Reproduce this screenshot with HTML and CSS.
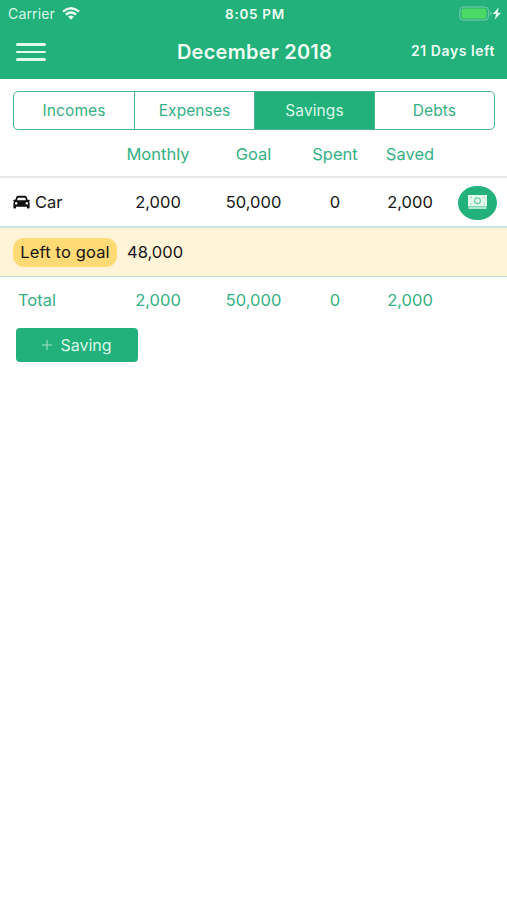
FILE: index.html
```html
<!DOCTYPE html>
<html lang="en">
<head>
<meta charset="utf-8">
<title>December 2018</title>
<link rel="stylesheet" href="styles.css">
</head>
<body>
<header class="top">
  <div class="status">
    <div class="carrier"><span>Carrier</span>
      <svg width="18" height="14" viewBox="0 0 18 14" fill="none" stroke="#effff6" stroke-width="2.3"><path d="M1 4.700Q9-2.100 17 4.700M3.900 7.700Q9 3.400 14.100 7.700"/><path d="M6.100 9.700Q9 7.400 11.900 9.700L9 12.700Z" fill="#effff6" stroke="none"/></svg>
    </div>
    <div class="time">8:05 PM</div>
    <div class="power">
      <svg width="44" height="16" viewBox="0 0 44 16"><rect x=".8" y="1" width="28.600" height="13" rx="3.400" fill="none" stroke="#79ceaa"/><rect x="2.500" y="2.600" width="25" height="9.800" rx="1.600" fill="#4bd865"/><path d="M31 5.400q1.600.5 1.600 2t-1.600 2z" fill="#79ceaa"/><path d="M39.800 1.300l-6 6.600h3.300l-1.300 5.600 6.100-6.700h-3.400z" fill="#effff6"/></svg>
    </div>
  </div>
  <nav class="bar">
    <div class="menu"><i></i><i></i><i></i></div>
    <h1 class="title">December 2018</h1>
    <div class="days">21 Days left</div>
  </nav>
</header>
<main>
  <div class="tabs">
    <div class="tab">Incomes</div>
    <div class="tab">Expenses</div>
    <div class="tab active">Savings</div>
    <div class="tab">Debts</div>
  </div>
  <div class="row head"><span></span><span>Monthly</span><span>Goal</span><span>Spent</span><span>Saved</span></div>
  <div class="row item">
    <span class="name"><svg width="17" height="14" viewBox="0 0 18 15"><path fill="#111" fill-rule="evenodd" d="M5.500.800h7q1.700 0 2.200 1.500l.9 2.800h1.600q.8 0 .6.800l-.2.700-1 .2q1.100.8 1.100 2v4.700q0 .9-.9.900h-1.100q-.9 0-.9-.9v-1H3.200v1q0 .9-.9.900H1.200q-.9 0-.9-.9V8.800q0-1.200 1.100-2l-1-.2-.2-.7q-.2-.8.6-.8h1.600l.9-2.800Q3.800.800 5.500.800ZM5.400 3q-.4 0-.5.400L4.300 5.500h9.400L13.100 3.400q-.1-.4-.5-.4ZM3.300 7.600a1.400 1.300 0 1 0 .01 0ZM14.700 7.600a1.400 1.300 0 1 0 .01 0Z"/></svg>Car</span>
    <span>2,000</span><span>50,000</span><span>0</span><span>2,000</span>
    <span class="pay"><svg width="19" height="14" viewBox="0 0 19 14"><path fill="#e2faee" d="M0 0h19v11.500H0zM.5 12.300h18v1.400H.5z"/><circle cx="9.500" cy="5.700" r="2.900" fill="none" stroke="#63c69c" stroke-width="1.100"/><path fill="#8ed7b7" d="M2 1.700h1.500v1.200H2zM15.500 1.700H17v1.200h-1.500zM2 8.600h1.500v1.200H2zM15.500 8.600H17v1.200h-1.500z"/></svg></span>
  </div>
  <div class="left"><span class="pill">Left to goal</span><span class="amount">48,000</span></div>
  <div class="row total"><span class="label">Total</span><span>2,000</span><span>50,000</span><span>0</span><span>2,000</span></div>
  <div class="add"><svg width="10" height="10" viewBox="0 0 10 10"><path d="M5 0v10M0 5h10" stroke="#a9e3c9"/></svg><span>Saving</span></div>
</main>
</body>
</html>
```
FILE: styles.css
```css
* { box-sizing: border-box; }
body { margin: 0; background: #fff; color: #151515; font: 16.5px/20px Inter, "Liberation Sans", sans-serif; }
.top { height: 79px; background: #22b07b; color: #effff6; }
.status { height: 27px; display: grid; grid-template-columns: 1fr auto 1fr; align-items: center; padding: 0 5px 0 8px; }
.carrier { display: flex; align-items: center; gap: 7px; font-size: 14px; letter-spacing: .15px; color: #d9f8e9; }
.time { font-size: 13.5px; font-weight: 600; letter-spacing: .7px; }
.power { display: flex; justify-content: flex-end; }
.power svg { margin-right: -1px; }
.bar { height: 50px; display: grid; grid-template-columns: 1fr auto 1fr; align-items: center; padding: 0 12px 0 16px; }
.menu { width: 30px; display: grid; gap: 4.500px; }
.menu i { height: 2.700px; border-radius: 2px; background: #dffaed; }
.title { margin: 0; font-size: 20px; font-weight: 600; line-height: 24px; letter-spacing: .25px; margin-right: 2px; }
.days { text-align: right; font-size: 14px; font-weight: 600; letter-spacing: .55px; line-height: 20px; padding-bottom: 2px; }
.tabs { height: 39px; margin: 12px 12px 0 13px; display: grid; grid-template-columns: repeat(4, 1fr); border: 1.5px solid #4cb78f; border-radius: 5px; overflow: hidden; color: #35b084; font-size: 15.5px; letter-spacing: .1px; }
.tab { display: flex; align-items: center; justify-content: center; }
.tab + .tab { border-left: 1px solid #4cb78f; }
.tab.active { background: #22b07b; color: #d9f8e9; }
.row { display: grid; grid-template-columns: 115px 86px 105px 58px 92px 1fr; align-items: center; text-align: center; }
.head { height: 48px; padding-top: 2px; color: #35b084; border-bottom: 2px solid #e5e9e9; }
.item { height: 50px; border-bottom: 2px solid #cbe6e3; }
.name { display: flex; align-items: center; gap: 5px; padding-left: 13px; }
.pay { width: 39px; height: 34px; margin: 2px 0 0 2px; padding-bottom: 3px; border-radius: 19px/17px; background: #22b07b; display: flex; align-items: center; justify-content: center; }
.left { height: 49px; display: flex; align-items: center; gap: 10px; padding-left: 13px; background: #fff3d8; border-bottom: 1px solid #b9e2d5; }
.pill { width: 104px; height: 29px; border-radius: 11px; background: #ffda75; text-align: center; line-height: 28px; letter-spacing: .15px; }
.total { height: 46px; color: #35b084; }
.label { text-align: left; padding-left: 18px; }
.add { width: 122px; height: 34px; margin: 5px 0 0 16px; border-radius: 4px; background: #22b07b; color: #d9f8e9; display: flex; align-items: center; justify-content: center; gap: 8px; font-size: 16px; }
```
